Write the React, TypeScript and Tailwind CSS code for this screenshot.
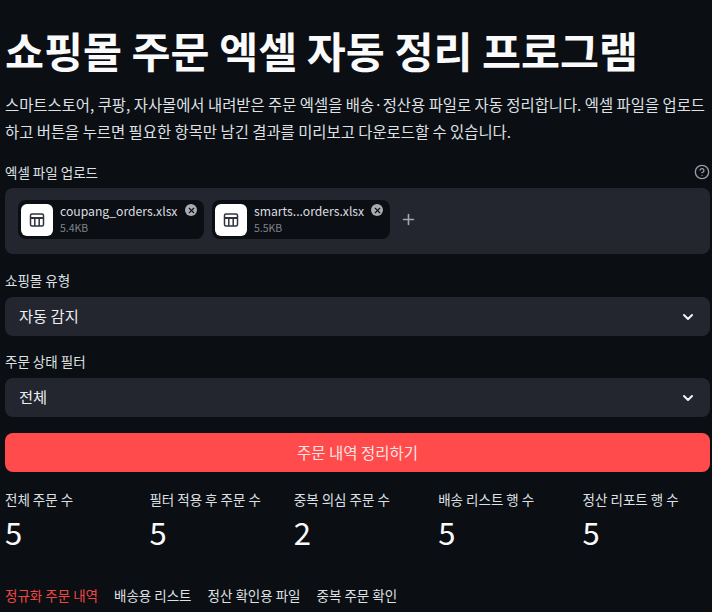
import { ChevronDown, CircleHelp, Plus, X } from 'lucide-react'

const font = { fontFamily: '"Noto Sans CJK KR", "Noto Sans", sans-serif' }

const files = [
  { name: 'coupang_orders.xlsx', size: '5.4KB', width: 'w-[186px]' },
  { name: 'smarts...orders.xlsx', size: '5.5KB', width: 'w-[178px]' },
]

const metrics = [
  { label: '전체 주문 수', value: '5' },
  { label: '필터 적용 후 주문 수', value: '5' },
  { label: '중복 의심 주문 수', value: '2' },
  { label: '배송 리스트 행 수', value: '5' },
  { label: '정산 리포트 행 수', value: '5' },
]

const tabs = ['정규화 주문 내역', '배송용 리스트', '정산 확인용 파일', '중복 주문 확인']

const TableIcon = () => (
  <svg width="16" height="16" viewBox="0 0 16 16" fill="none" stroke="#31333f" strokeWidth="1.5">
    <rect x="1.5" y="2" width="13" height="12" rx="1.5" />
    <path d="M1.5 6h13" strokeWidth="2" />
    <path d="M5.8 6v8M10.2 6v8" />
  </svg>
)

const FileChip = ({ name, size, width }: { name: string; size: string; width: string }) => (
  <div className={`relative flex items-center gap-[7px] h-[39px] rounded-lg bg-[#0b0e13] pl-[3px] ${width}`}>
    <div className="flex items-center justify-center w-[32px] h-[32px] rounded-md bg-white">
      <TableIcon />
    </div>
    <div className="flex flex-col gap-[2px] -mt-[2px]">
      <span className="text-[12.2px] leading-[16px] text-[#dcdde1] whitespace-nowrap">{name}</span>
      <span className="text-[10.5px] leading-[14px] text-[#7f838c]">{size}</span>
    </div>
    <div className="absolute right-[7px] top-[4px] flex items-center justify-center w-[12px] h-[12px] rounded-full bg-[#a9abb1]">
      <X size={9} strokeWidth={3} color="#0b0e13" />
    </div>
  </div>
)

const SelectBox = ({ label, value }: { label: string; value: string }) => (
  <div>
    <div className="text-[13.5px] leading-[20px] text-[#dfe0e4] mb-[7px]">{label}</div>
    <div className="flex items-center justify-between h-[39px] rounded-lg bg-[#23262f] pl-[14px] pr-[14px]">
      <span className="text-[15.3px] leading-[20px] -mt-[4px] text-[#eceef1]">{value}</span>
      <ChevronDown size={16} strokeWidth={3} color="#f3f4f6" />
    </div>
  </div>
)

export default function App() {
  return (
    <div style={font} className="w-[712px] h-[612px] overflow-hidden bg-[#0b0e13] text-white pl-[5px] pr-[2px] pt-[22px]">
      <h1 className="text-[42.4px] leading-[56px] font-bold whitespace-nowrap text-[#fafafa]">
        쇼핑몰 주문 엑셀 자동 정리 프로그램
      </h1>

      <p className="mt-[13px] text-[15.4px] leading-[27px] text-[#dfe0e4] whitespace-nowrap">
        스마트스토어, 쿠팡, 자사몰에서 내려받은 주문 엑셀을 배송·정산용 파일로 자동 정리합니다. 엑셀 파일을 업로드
        <br />
        하고 버튼을 누르면 필요한 항목만 남긴 결과를 미리보고 다운로드할 수 있습니다.
      </p>

      <div className="mt-[15px] flex items-center justify-between h-[24px]">
        <span className="text-[13.5px] text-[#dfe0e4]">엑셀 파일 업로드</span>
        <CircleHelp size={16} strokeWidth={2} color="#9a9ca3" />
      </div>

      <div className="mt-[4px] flex items-center gap-[8px] h-[66px] rounded-lg bg-[#23262f] pl-[13px] pb-[3px]">
        {files.map((file) => (
          <FileChip key={file.name} {...file} />
        ))}
        <Plus size={17} strokeWidth={2.25} color="#a4a6ad" className="ml-[2px]" />
      </div>

      <div className="mt-[16px]">
        <SelectBox label="쇼핑몰 유형" value="자동 감지" />
      </div>
      <div className="mt-[15px]">
        <SelectBox label="주문 상태 필터" value="전체" />
      </div>

      <button className="mt-[16px] w-full h-[39px] rounded-lg bg-[#ff4b4b] text-[15.5px] text-[#fbe3e3]">
        주문 내역 정리하기
      </button>

      <div className="mt-[17px] grid grid-cols-5 w-[722px]">
        {metrics.map((m) => (
          <div key={m.label}>
            <div className="text-[13.5px] leading-[20px] text-[#dfe0e4] whitespace-nowrap">{m.label}</div>
            <div className="mt-[3px] text-[31px] leading-[40px] text-[#fafafa]">{m.value}</div>
          </div>
        ))}
      </div>

      <div className="mt-[33px] flex gap-[16px] text-[13.5px] leading-[20px] text-[#dfe0e4]">
        {tabs.map((tab, i) => (
          <span key={tab} className={i === 0 ? 'text-[#f04646]' : ''}>
            {tab}
          </span>
        ))}
      </div>
    </div>
  )
}
